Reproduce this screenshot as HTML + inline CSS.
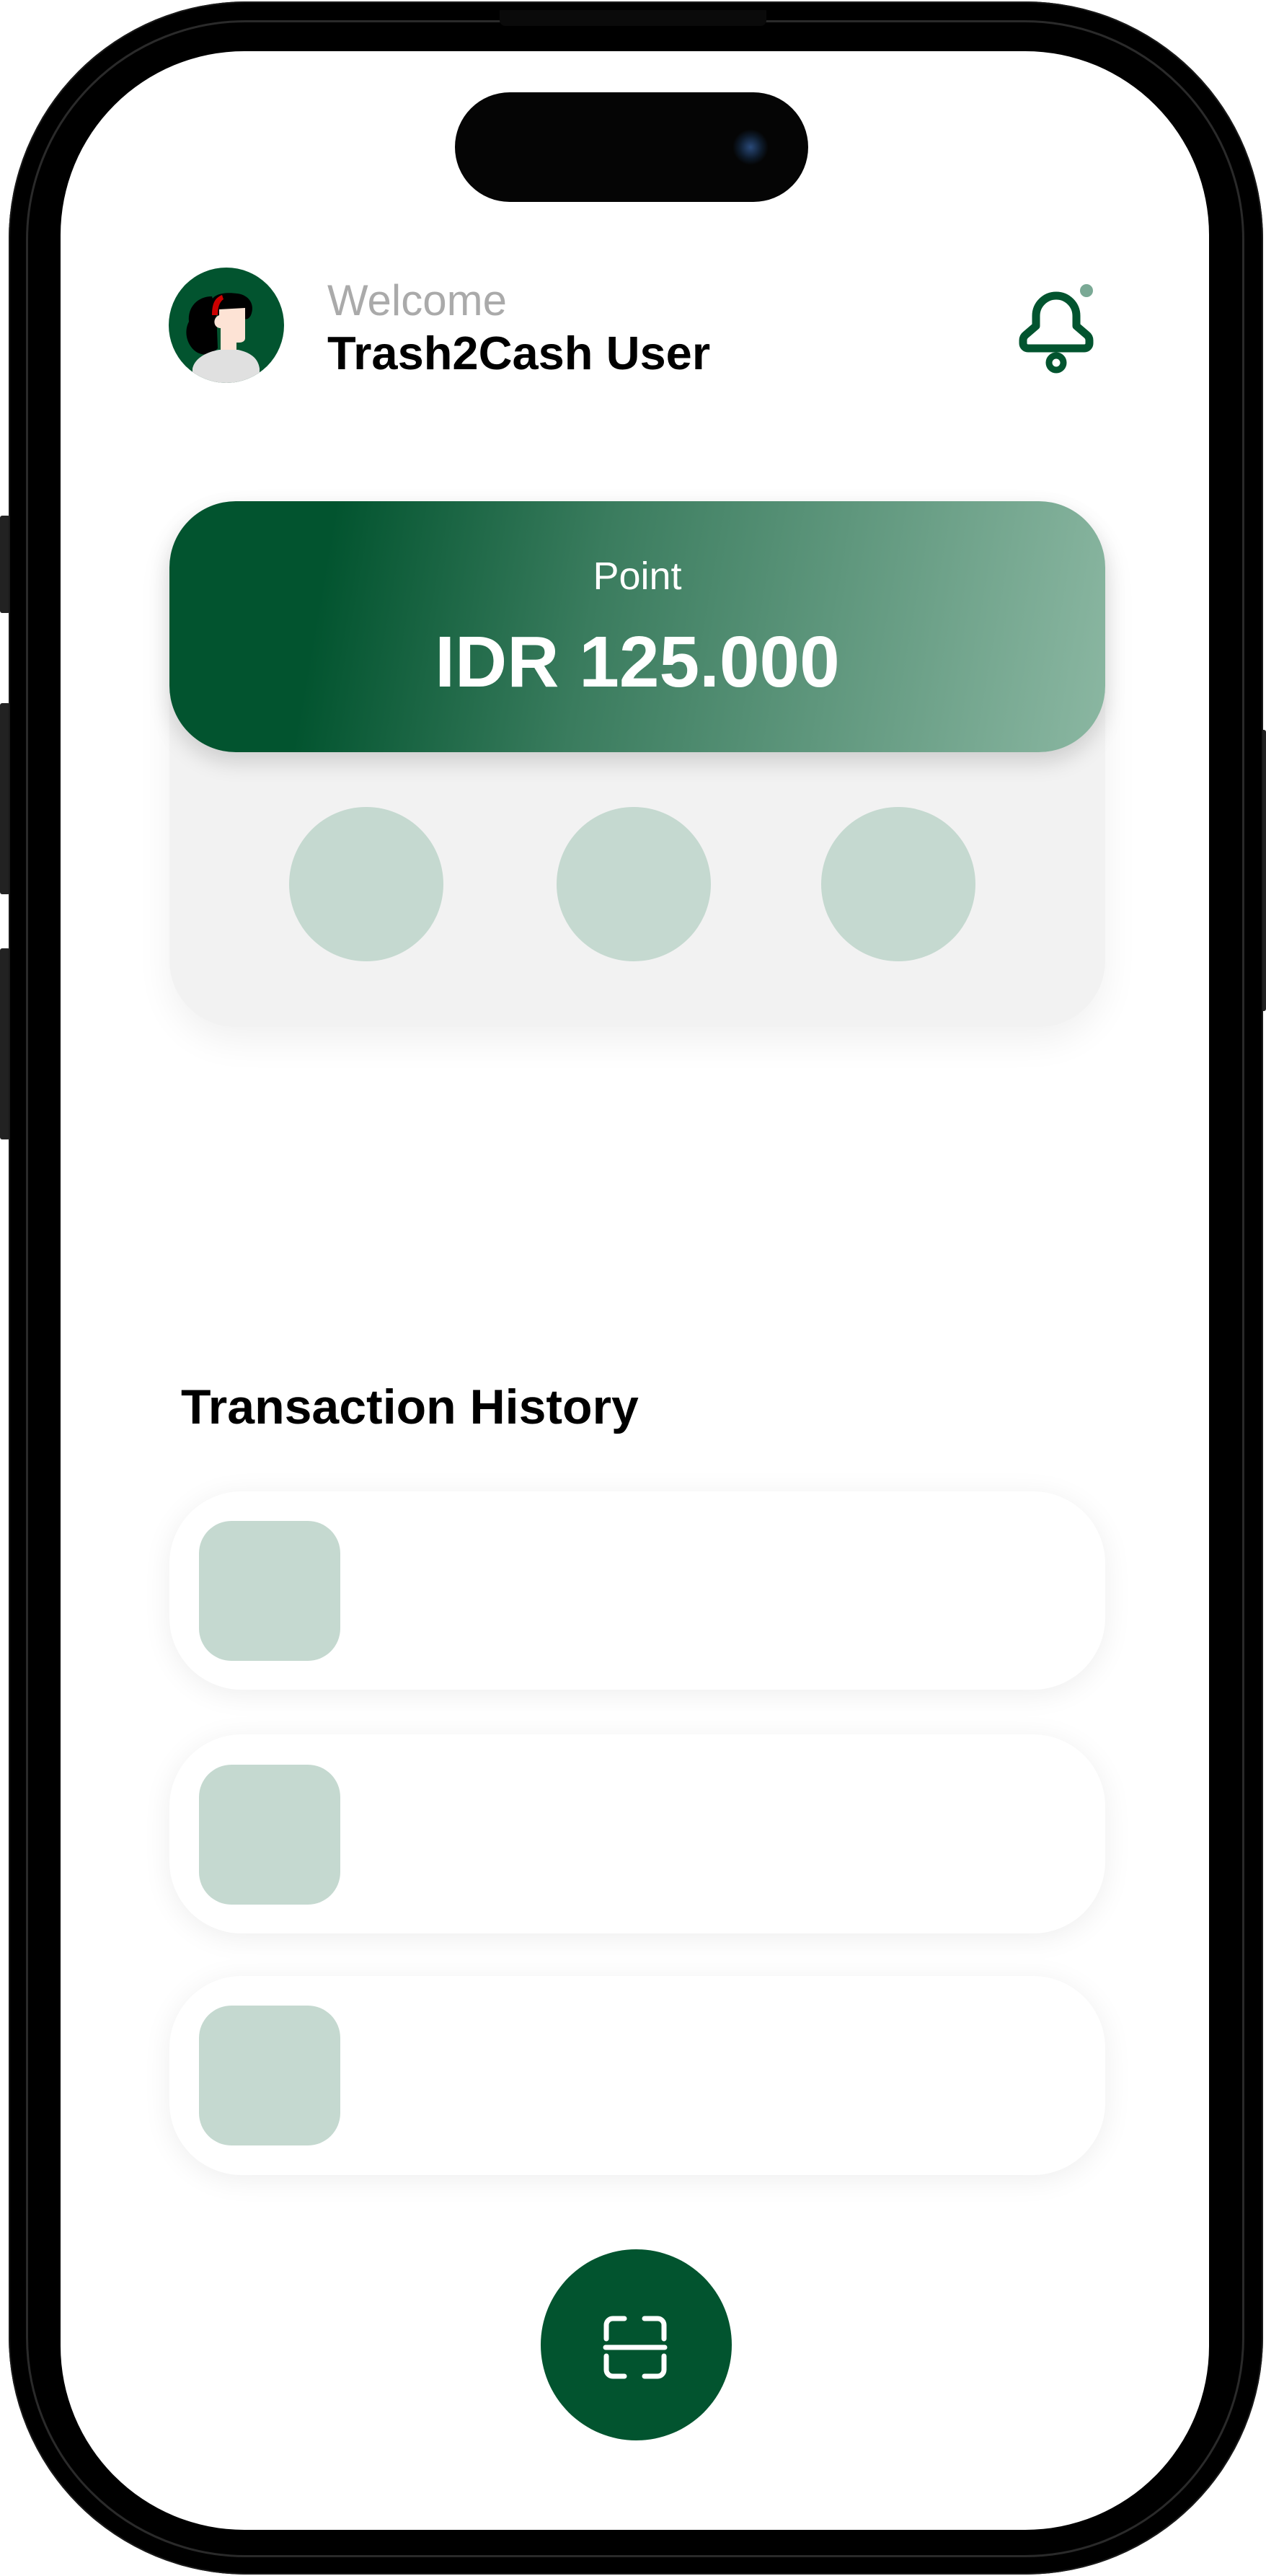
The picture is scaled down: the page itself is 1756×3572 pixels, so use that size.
<!DOCTYPE html>
<html><head><meta charset="utf-8">
<style>
html,body{margin:0;padding:0;background:#fff;}
body{width:1756px;height:3572px;position:relative;overflow:hidden;font-family:"Liberation Sans",sans-serif;}
.abs{position:absolute;}
.phone{left:12px;top:2px;width:1740px;height:3568px;background:#000;border-radius:330px;box-shadow:0 0 0 2px #1a1a1a inset;}
.ring{left:36px;top:28px;width:1690px;height:3518px;border-radius:305px;border:3px solid #2a2a2a;box-sizing:border-box;}
.screen{left:84px;top:71px;width:1593px;height:3437px;background:#fff;border-radius:255px;overflow:hidden;}
.btn{background:#222;border-radius:3px;}
</style></head><body>
<div class="abs btn" style="left:0;top:715px;width:14px;height:135px"></div>
<div class="abs btn" style="left:0;top:975px;width:14px;height:265px"></div>
<div class="abs btn" style="left:0;top:1315px;width:14px;height:265px"></div>
<div class="abs btn" style="left:1742px;top:1012px;width:14px;height:390px"></div>
<div class="abs phone"></div>
<div class="abs ring"></div>
<div class="abs" style="left:693px;top:14px;width:370px;height:22px;background:#0a0a0a;border-radius:0 0 8px 8px"></div>
<div class="abs screen">
  <div class="abs" style="left:547px;top:57px;width:490px;height:152px;background:#050505;border-radius:76px"></div>
  <div class="abs" style="left:932px;top:108px;width:50px;height:50px;border-radius:50%;background:radial-gradient(circle at 50% 50%,#2a4a7a 0,#0d1a2a 45%,#050505 70%)"></div>

  <svg class="abs" style="left:150px;top:300px" width="160" height="160" viewBox="0 0 160 160">
    <defs><clipPath id="c"><circle cx="80" cy="80" r="80"/></clipPath></defs>
    <circle cx="80" cy="80" r="80" fill="#02542f"/>
    <g clip-path="url(#c)">
      <path d="M60 40 C40 40 26 55 28 75 C20 90 26 110 40 118 C52 124 62 118 68 112 L66 60 Z" fill="#000"/>
      <path d="M58 50 C60 35 80 34 95 36 C112 38 120 52 114 66 C110 74 104 72 100 68 L70 70 Z" fill="#000"/>
      <path d="M60 66 C60 50 64 42 74 38 L76 44 C70 48 68 56 68 66 Z" fill="#c00"/>
      <path d="M70 58 L106 56 L106 98 C106 102 102 104 98 104 L94 104 L94 118 L72 118 L72 84 C62 84 60 70 70 66 Z" fill="#fde3d5"/>
      <path d="M33 165 L33 140 C36 126 52 117 70 114 L96 114 C114 118 124 126 126 140 L126 165 Z" fill="#e0e0e0"/>
    </g>
  </svg>
  <div class="abs" style="left:370px;top:316px;font-size:60px;color:#aaa;line-height:60px;white-space:nowrap">Welcome</div>
  <div class="abs" style="left:370px;top:386px;font-size:65px;font-weight:bold;color:#000;line-height:65px;white-space:nowrap">Trash2Cash User</div>

  <svg class="abs" style="left:1296px;top:309px" width="160" height="160" viewBox="0 0 160 160">
    <path d="M57,72 V58 a28,28 0 0 1 56,0 V72 l14,12 a10,10 0 0 1 4,8 v4 a7,7 0 0 1 -7,7 H46 a7,7 0 0 1 -7,-7 v-4 a10,10 0 0 1 4,-8 Z" fill="none" stroke="#02542f" stroke-width="11" stroke-linejoin="round"/>
    <circle cx="85" cy="123" r="10" fill="none" stroke="#02542f" stroke-width="9"/>
    <circle cx="127" cy="23" r="9" fill="#7aa995"/>
  </svg>

  <div class="abs" style="left:151px;top:624px;width:1298px;height:729px;background:#f2f2f2;border-radius:92px;box-shadow:0 20px 50px rgba(0,0,0,0.06)"></div>
  <div class="abs" style="left:151px;top:624px;width:1298px;height:348px;border-radius:92px;background:linear-gradient(100deg,#02542f 0%,#02542f 17%,#3a7c5e 45%,#8bb7a2 100%);box-shadow:0 14px 30px rgba(0,0,0,0.15)"></div>
  <div class="abs" style="left:151px;top:701px;width:1298px;text-align:center;font-size:54px;color:#fff;line-height:54px">Point</div>
  <div class="abs" style="left:151px;top:797px;width:1298px;text-align:center;font-size:100px;color:#fff;line-height:100px;font-weight:bold">IDR 125.000</div>
  <div class="abs" style="left:317px;top:1048px;width:214px;height:214px;border-radius:50%;background:#c5d9d0"></div>
  <div class="abs" style="left:688px;top:1048px;width:214px;height:214px;border-radius:50%;background:#c5d9d0"></div>
  <div class="abs" style="left:1055px;top:1048px;width:214px;height:214px;border-radius:50%;background:#c5d9d0"></div>

  <div class="abs" style="left:167px;top:1846px;font-size:68px;color:#000;line-height:68px;font-weight:bold;white-space:nowrap">Transaction History</div>

  <div class="abs" style="left:151px;top:1997px;width:1298px;height:275px;border-radius:100px;background:#fff;box-shadow:0 6px 40px rgba(0,0,0,0.07)"></div>
  <div class="abs" style="left:192px;top:2038px;width:196px;height:194px;border-radius:45px;background:#c5d9d0"></div>
  <div class="abs" style="left:151px;top:2334px;width:1298px;height:276px;border-radius:100px;background:#fff;box-shadow:0 6px 40px rgba(0,0,0,0.07)"></div>
  <div class="abs" style="left:192px;top:2376px;width:196px;height:194px;border-radius:45px;background:#c5d9d0"></div>
  <div class="abs" style="left:151px;top:2669px;width:1298px;height:276px;border-radius:100px;background:#fff;box-shadow:0 6px 40px rgba(0,0,0,0.07)"></div>
  <div class="abs" style="left:192px;top:2710px;width:196px;height:194px;border-radius:45px;background:#c5d9d0"></div>

  <div class="abs" style="left:666px;top:3048px;width:265px;height:265px;border-radius:50%;background:#02542f"></div>
  <svg class="abs" style="left:723px;top:3120px" width="150" height="130" viewBox="0 0 150 130">
    <g fill="none" stroke="#fff" stroke-width="7" stroke-linecap="round">
      <path d="M34 52 V33 a9 9 0 0 1 9 -9 H59"/>
      <path d="M87 24 H105 a9 9 0 0 1 9 9 V52"/>
      <path d="M34 76 V95 a9 9 0 0 0 9 9 H59"/>
      <path d="M114 76 V95 a9 9 0 0 1 -9 9 H87"/>
      <path d="M33 64 H115"/>
    </g>
  </svg>
</div>
</body></html>
